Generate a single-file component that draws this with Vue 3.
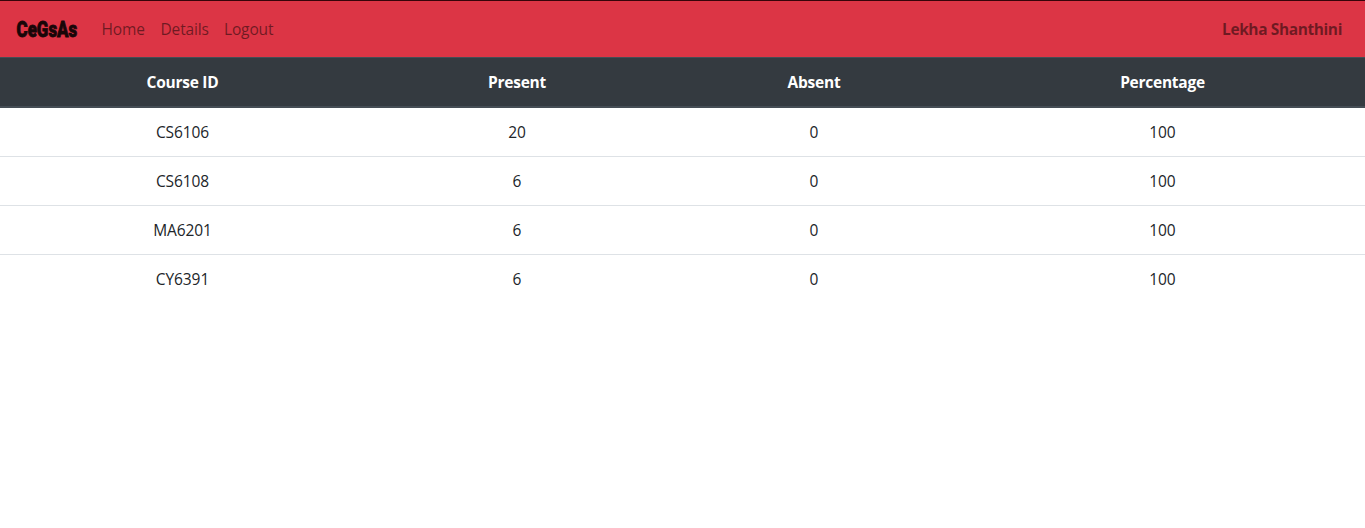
<script setup>
const links = [
  { label: 'Home', kind: 'home' },
  { label: 'Details', kind: 'details' },
  { label: 'Logout', kind: 'logout' },
]
const headings = ['Course ID', 'Present', 'Absent', 'Percentage']
const rows = [
  ['CS6106', 20, 0, 100],
  ['CS6108', 6, 0, 100],
  ['MA6201', 6, 0, 100],
  ['CY6391', 6, 0, 100],
]
</script>

<template>
  <div class="page">
    <nav class="navbar">
      <svg class="brand" width="62" height="26" viewBox="0 0 62 26">
        <text x="0.6" y="20.6" textLength="60.6" lengthAdjust="spacingAndGlyphs">CeGsAs</text>
      </svg>
      <div class="links">
        <a v-for="link in links" :key="link.kind" :class="['link', link.kind]">{{ link.label }}</a>
      </div>
      <span class="user">Lekha Shanthini</span>
    </nav>
    <table class="table">
      <colgroup>
        <col class="c1" /><col class="c2" /><col class="c3" /><col class="c4" />
      </colgroup>
      <thead>
        <tr><th v-for="h in headings" :key="h">{{ h }}</th></tr>
      </thead>
      <tbody>
        <tr v-for="row in rows" :key="row[0]">
          <td v-for="(cell, i) in row" :key="i">{{ cell }}</td>
        </tr>
      </tbody>
    </table>
  </div>
</template>

<style>
body { background: #fff; }
</style>

<style scoped>
.page {
  min-height: 528px;
  font-family: "Segoe UI", "Open Sans", "Noto Sans", sans-serif;
  font-size: 15.5px;
  line-height: 24px;
  color: #212529;
}
.navbar {
  display: flex;
  align-items: center;
  box-sizing: border-box;
  height: 57px;
  padding: 0 23px 0 16px;
  border-top: 1px solid #370409;
  background: #dc3545;
}
.brand { display: block; flex: none; overflow: visible; }
.brand text {
  font-family: Impact, Roboto, sans-serif;
  font-weight: 900;
  font-size: 21.6px;
  fill: #190608;
  stroke: #190608;
  stroke-width: 0.8px;
}
.links { display: flex; gap: 16px; margin-left: 23.5px; }
.link { color: rgba(0, 0, 0, 0.5); white-space: nowrap; letter-spacing: -0.15px; }
.home { width: 43px; }
.details { width: 47.5px; }
.user { margin-left: auto; font-weight: 700; color: rgba(0, 0, 0, 0.5); letter-spacing: -0.4px; }
.table { width: 1365px; table-layout: fixed; border-collapse: separate; border-spacing: 0; text-align: center; }
.c1 { width: 365px; }
.c2 { width: 304px; }
.c3 { width: 290px; }
.c4 { width: 406px; }
th, td { box-sizing: border-box; padding: 12px; }
th:last-child, td:last-child { padding-left: 13px; }
th {
  height: 51px;
  color: #fff;
  background: #343a40;
  border-top: 1px solid #454d55;
  border-bottom: 2px solid #454d55;
  letter-spacing: -0.25px;
}
td { height: 49px; border-top: 1px solid #dee2e6; letter-spacing: -0.1px; }
tbody tr:first-child td { height: 48px; border-top: 0; }
</style>
